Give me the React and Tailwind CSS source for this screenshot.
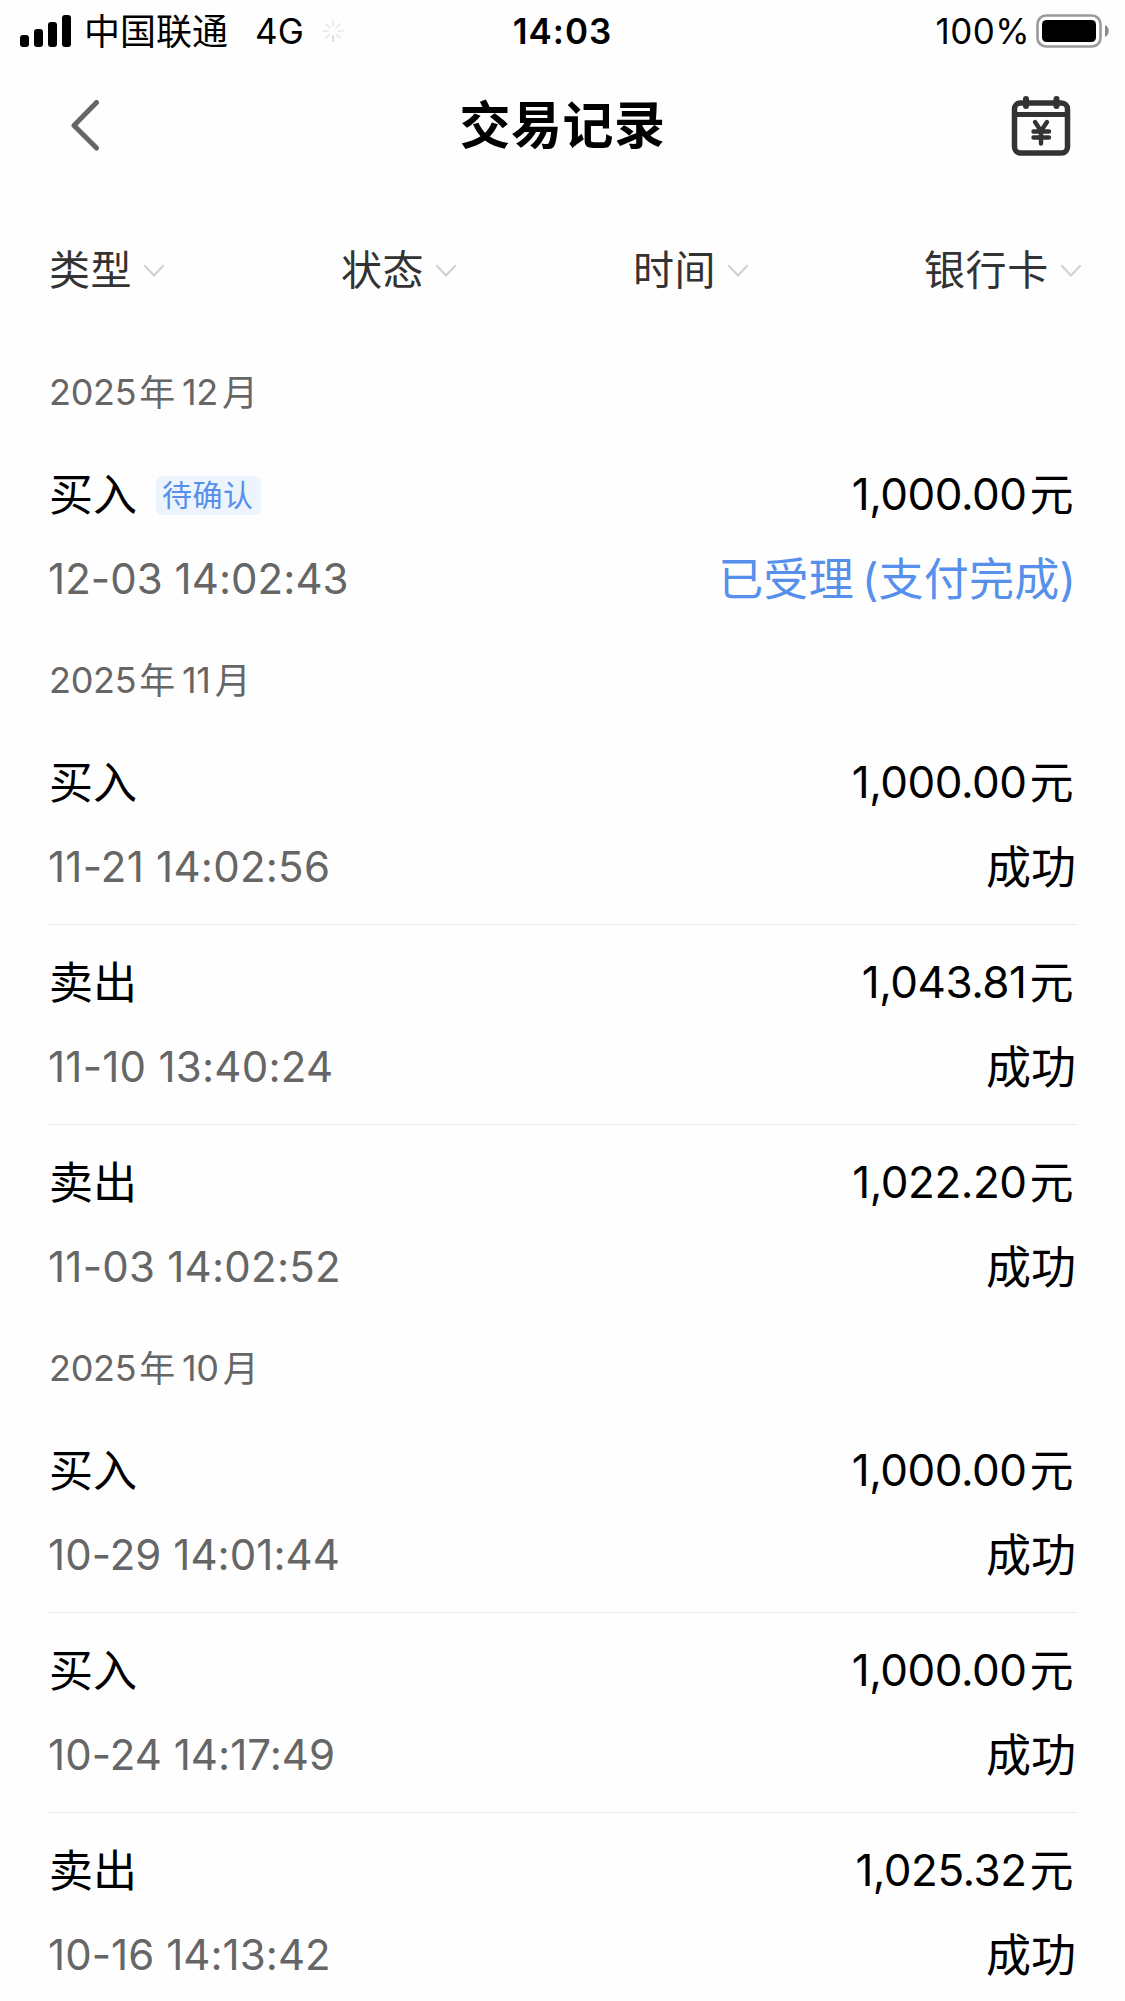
// App.jsx — Transaction history screen

const filters = [
  { label: '类型', className: 'w-[292px]' },
  { label: '状态', className: 'w-[292px]' },
  { label: '时间', className: 'w-[291px]' },
  { label: '银行卡', className: '' },
];

const groups = [
  {
    year: '2025',
    month: '12',
    items: [
      { type: '买入', tag: '待确认', amount: '1,000.00', time: '12-03 14:02:43', status: '已受理', detail: '(支付完成)' },
    ],
  },
  {
    year: '2025',
    month: '11',
    items: [
      { type: '买入', amount: '1,000.00', time: '11-21 14:02:56', status: '成功' },
      { type: '卖出', amount: '1,043.81', time: '11-10 13:40:24', status: '成功' },
      { type: '卖出', amount: '1,022.20', time: '11-03 14:02:52', status: '成功' },
    ],
  },
  {
    year: '2025',
    month: '10',
    items: [
      { type: '买入', amount: '1,000.00', time: '10-29 14:01:44', status: '成功' },
      { type: '买入', amount: '1,000.00', time: '10-24 14:17:49', status: '成功' },
      { type: '卖出', amount: '1,025.32', time: '10-16 14:13:42', status: '成功' },
    ],
  },
];

function SignalIcon() {
  return (
    <svg className="w-[51px] h-8 shrink-0" viewBox="0 0 51 32">
      <rect x="0" y="20" width="9" height="12" rx="3" />
      <rect x="14" y="14" width="9" height="18" rx="3" />
      <rect x="28" y="7" width="9" height="25" rx="3" />
      <rect x="42" y="0" width="9" height="32" rx="3" />
    </svg>
  );
}

function Spinner() {
  return (
    <svg className="w-6 h-6 shrink-0" viewBox="0 0 24 24" fill="none" stroke="#ececec" strokeWidth="2" strokeLinecap="round">
      <path d="M12 2v5M19 5l-3.5 3.5M22 12h-5M19 19l-3.5-3.5M5 19l3.5-3.5M2 12h5M5 5l3.5 3.5" />
      <path d="M12 22v-5" stroke="#dcdcdc" />
    </svg>
  );
}

function BatteryIcon() {
  return (
    <svg className="-mt-px w-[74px] h-[34px] shrink-0" viewBox="0 0 74 34">
      <rect x="1.5" y="1.5" width="63" height="31" rx="8.5" fill="none" stroke="#999" strokeWidth="2.6" />
      <rect x="6" y="6" width="54" height="22" rx="4.5" />
      <path d="M69 11c5 2 5 10 0 12z" fill="#8c8c8c" />
    </svg>
  );
}

function CalendarIcon() {
  return (
    <svg className="w-[60px] h-[62px]" viewBox="0 0 60 62" fill="none" stroke="#333" strokeWidth="5.5" strokeLinecap="round" strokeLinejoin="round">
      <rect x="3.5" y="9" width="53" height="50" rx="6" />
      <path d="M3.5 20.5h53" strokeWidth="5" strokeLinecap="butt" />
      <path d="M15 5v7M45.5 5v7" strokeWidth="6" />
      <path d="M24 28l6 9 6-9M30 37.5v12M22.5 37.5h15.5M22.5 43.5h15.5" strokeWidth="4.4" />
    </svg>
  );
}

function StatusBar() {
  return (
    <div className="grid grid-cols-3 h-[60px] px-5 items-center text-[35px] leading-[60px] whitespace-nowrap">
      <div className="flex items-center">
        <SignalIcon />
        <span className="ml-[13px] pt-[2px] text-[36px]">中国联通</span>
        <span className="ml-[27px]">4G</span>
        <span className="ml-[17px]"><Spinner /></span>
      </div>
      <div className="text-center font-semibold tracking-[1px]">14:03</div>
      <div className="flex items-center justify-end gap-[6px] -mr-[5px]">
        <span className="tracking-[0.4px]">100%</span>
        <BatteryIcon />
      </div>
    </div>
  );
}

function NavBar() {
  return (
    <div className="grid grid-cols-[1fr_auto_1fr] items-center h-[130px] pl-[70px] pr-[54px]">
      <svg className="w-[60px] h-[52px]" viewBox="0 0 60 52" fill="none" stroke="#666" strokeWidth="5" strokeLinecap="round" strokeLinejoin="round">
        <path d="M26.5 3.5L4 26.5l22.5 22.5" />
      </svg>
      <h1 className="-ml-4 pt-[2px] text-[51px] font-bold tracking-[0.5px]">交易记录</h1>
      <div className="flex justify-end">
        <CalendarIcon />
      </div>
    </div>
  );
}

function FilterBar() {
  return (
    <div className="flex items-center h-[158px] pl-[49px] text-[41px] text-[#333]">
      {filters.map((f) => (
        <button key={f.label} className={`flex items-center gap-[11px] ${f.className}`}>
          <span className="pt-[4px] tracking-[0.6px]">{f.label}</span>
          <svg className="w-[22px] h-[14px] mt-[4px]" viewBox="0 0 22 14" fill="none" stroke="#d2d2d2" strokeWidth="2.2" strokeLinecap="round" strokeLinejoin="round">
            <path d="M2 2l9 9.5 9-9.5" />
          </svg>
        </button>
      ))}
    </div>
  );
}

function Record({ item, last }) {
  const tracking = item.time.startsWith('11') ? 'tracking-[0.25px]' : 'tracking-[0.05px]';

  return (
    <div className={`h-[201px] -mb-px pt-[25px] text-[44px] leading-[66px] ${last ? '' : 'border-b border-[#e9e9e9]'}`}>
      <div className="flex items-center justify-between">
        <div className="flex items-center">
          <span className="relative top-px left-px">{item.type}</span>
          {item.tag && (
            <span className="ml-[20px] mt-[2px] h-[39px] pl-[6px] pr-[7px] rounded-[6px] bg-[#edf4fe] text-[#568fec] text-[30px] leading-[39px] tracking-[0.5px]">
              {item.tag}
            </span>
          )}
        </div>
        <div className="pr-[4px] tracking-[-0.5px]">
          {item.amount}
          <span className="relative top-px ml-[3px]">元</span>
        </div>
      </div>
      <div className="flex items-start justify-between mt-[19px]">
        <span className={`text-[42px] text-[#666] ${tracking}`}>{item.time}</span>
        <span className={`pr-px pt-px text-[45px] ${item.detail ? 'text-[#568fec] tracking-[0.2px]' : ''}`}>
          {item.status}
          {item.detail && <span className="ml-[8px]">{item.detail}</span>}
        </span>
      </div>
    </div>
  );
}

export default function App() {
  return (
    <div className="w-[1125px] h-[2001px] overflow-hidden bg-[#fefefe] text-black font-['Inter','Noto_Sans_CJK_SC',sans-serif]">
      <StatusBar />
      <NavBar />
      <FilterBar />
      <div className="px-12">
        {groups.map((g) => (
          <section key={g.month}>
            <h2 className="h-[88px] pl-px leading-[88px] text-[36px] text-[#666] tracking-[-0.3px]">
              {g.year}
              <span className="relative top-px ml-[3px] mr-[7px]">年</span>
              {g.month}
              <span className="relative top-px ml-[4px]">月</span>
            </h2>
            {g.items.map((item, i) => (
              <Record key={item.time} item={item} last={i === g.items.length - 1} />
            ))}
          </section>
        ))}
      </div>
    </div>
  );
}
